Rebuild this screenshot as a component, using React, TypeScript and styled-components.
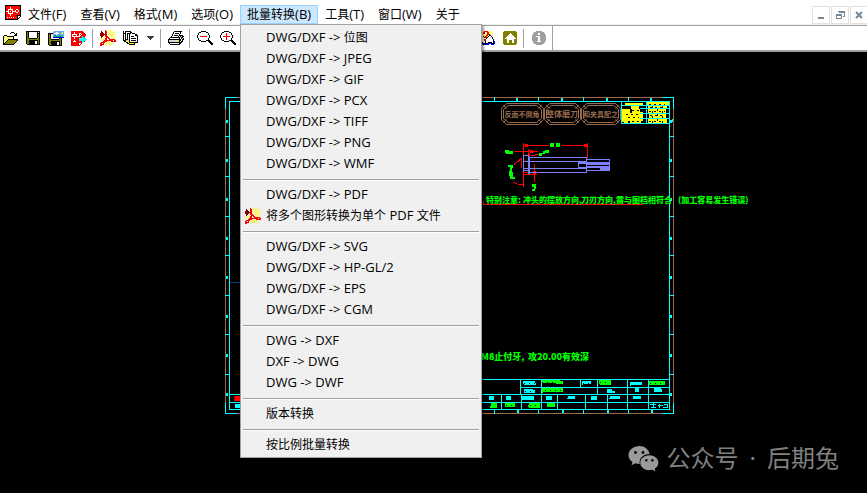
import React from "react";
import styled, { createGlobalStyle, css } from "styled-components";

const GlobalStyle = createGlobalStyle`
  *, *::before, *::after { box-sizing: border-box; }
  body { margin: 0; background: #000; }
  button { font: inherit; color: inherit; }
`;

const uiFont = `"Open Sans", "Noto Sans CJK SC", sans-serif`;

const Window = styled.div`
  position: relative;
  display: flex;
  flex-direction: column;
  min-height: 100vh;
  overflow: hidden;
  background: #000;
  color: #000;
  font-family: ${uiFont};
  font-size: 12px;
`;

const Latin = styled.span`
  font-size: 13px;
`;

const MenuBar = styled.nav`
  display: flex;
  align-items: flex-end;
  height: 25px;
  background: #fff;
  border-bottom: 1px solid #f0f0f0;
`;

const AppIcon = styled.div`
  display: flex;
  width: 21px;
  height: 19px;
  padding-left: 5px;
`;

const MenuEntry = styled.div`
  position: relative;
`;

const MenuTitle = styled.button<{ $open?: boolean }>`
  display: block;
  height: 19px;
  padding: 0 6px;
  border: 1px solid transparent;
  background: transparent;
  line-height: 16px;
  white-space: nowrap;
  ${({ $open }) =>
    $open &&
    css`
      background: #cce8ff;
      border-color: #99d1ff;
    `}
`;

const WindowControls = styled.div`
  display: flex;
  gap: 1px;
  margin-left: auto;
  margin-right: -1px;
`;

const ControlButton = styled.button`
  display: grid;
  place-items: center;
  width: 18px;
  height: 18px;
  padding: 0;
  border: 1px solid #e2e2e2;
  background: #fff;
`;

const ToolBar = styled.div`
  display: flex;
  align-items: center;
  height: 27px;
  margin-left: -2px;
  background: #fff;
  border-top: 1px solid #a0a0a0;
  border-bottom: 2px solid #a0a0a0;
`;

const ToolButton = styled.button<{ $narrow?: boolean }>`
  display: grid;
  place-items: center;
  flex: none;
  width: ${({ $narrow }) => ($narrow ? 16 : 23)}px;
  height: 24px;
  padding: 0;
  border: 0;
  background: transparent;
`;

const Divider = styled.span<{ $tall?: boolean }>`
  flex: none;
  width: 1px;
  height: ${({ $tall }) => ($tall ? 24 : 19)}px;
  margin: 0 ${({ $tall }) => ($tall ? 0 : 3)}px 0 2px;
  background: #a0a0a0;
`;

const ToolGap = styled.span`
  flex: none;
  width: 236px;
`;

const Dropdown = styled.ul`
  position: absolute;
  z-index: 2;
  top: 100%;
  left: 0;
  width: 242px;
  margin: 0;
  padding: 2px;
  list-style: none;
  background: #f0f0f0;
  border: 1px solid #a0a0a0;
  box-shadow: 2px 2px 2px rgba(0, 0, 0, 0.4);
`;

const Command = styled.button`
  display: grid;
  grid-template-columns: 23px 1fr;
  align-items: center;
  width: 100%;
  height: 21px;
  padding: 0;
  border: 0;
  background: transparent;
  text-align: left;
  white-space: pre;
  line-height: 20px;
`;

const CommandLabel = styled.span`
  grid-column: 2;
`;

const CommandIcon = styled.span`
  display: flex;
  padding-left: 2px;
`;

const Rule = styled.li`
  height: 2px;
  margin: 5px 0 3px;
  background: #fff;
  border-top: 1px solid #a0a0a0;
`;

const Canvas = styled.main`
  display: flex;
  flex: 1;
  min-height: 0;
  background: #000;
`;

const Sheet = styled.svg`
  flex: 1;
  width: 100%;
  min-width: 0;
  font-family: "Noto Sans CJK SC", sans-serif;
`;

const Watermark = styled.div`
  position: absolute;
  right: 28px;
  bottom: 17px;
  display: flex;
  align-items: center;
  gap: 8px;
  color: #808080;
  font-family: "Noto Sans", "Noto Sans CJK SC", sans-serif;
  font-size: 24px;
  line-height: 36px;
`;

const WatermarkText = styled.div`
  display: flex;
  gap: 11px;
`;

const palette: Record<string, string> = {
  k: "#000000",
  w: "#ffffff",
  y: "#ffff00",
  o: "#808000",
  r: "#ff0000",
  m: "#800000",
  g: "#a0a0a0",
  s: "#d4d4d4",
  b: "#0000ff",
  c: "#00ffff",
  l: "#6aa8ff",
  n: "#00b050",
};

function PixelIcon({ rows }: { rows: string[] }) {
  const cells: React.ReactElement[] = [];
  rows.forEach((row, y) => {
    let x = 0;
    while (x < row.length) {
      const code = row[x];
      let end = x + 1;
      while (row[end] === code) end += 1;
      if (palette[code]) {
        cells.push(<rect key={`${x}-${y}`} x={x} y={y} width={end - x} height={1} fill={palette[code]} />);
      }
      x = end;
    }
  });
  const width = Math.max(...rows.map((r) => r.length));
  return (
    <svg width={width} height={rows.length} shapeRendering="crispEdges" aria-hidden="true">
      {cells}
    </svg>
  );
}

const openRows = [
  ".........kkk....",
  "........k...k.k.",
  ".............kk.",
  "..kkk.......kkk.",
  ".kywykkkkkkk....",
  ".kwywywywywk....",
  ".kywywywywyk....",
  ".kwywykkkkkkkkkk",
  ".kywykoooooooook",
  ".kwykoooooooook.",
  ".kykoooooooook..",
  ".kkoooooooook...",
  ".kkkkkkkkkkk....",
];
const saveRows = [
  "kkkkkkkkkkkkkk",
  "kokwwwwwwwwkwk",
  "kokwwwwwwwwkkk",
  "kokwwwwwwwwkok",
  "kokwwwwwwwwkok",
  "kokwwwwwwwwkok",
  "kokwwwwwwwwkok",
  "kookkkkkkkkook",
  "kooooooooooook",
  "kookkkkkkkkkok",
  "kookkkkkkwwkok",
  "kookkkkkkwwkok",
  "kookkkkkkwwkok",
  ".kkkkkkkkkkkkk",
];
const saveAsRows = [
  ".....yllllllllll",
  ".....lllwwllllyl",
  "kkkkklwwwwwllyyl",
  "kokwwlllwlllllll",
  "kokwwlnnlllnnlll",
  "kokwwlonnnnnnnnl",
  "kokwwbbbbbbbbbbb",
  "kokwwwwwwwwkok..",
  "kookkkkkkkkook..",
  "kooooooooooook..",
  "kookkkkkkkkkok..",
  "kookkkkkkwwkok..",
  "kookkkkkkwwkok..",
  "kookkkkkkwwkok..",
  ".kkkkkkkkkkkkk..",
];
const exportRows = [
  "rrrrrrrrrrrr....",
  "rrrwrrrrrrrrr...",
  "rrrwrrrrwwrrrr..",
  "rwwwwwrrwrwrrrr.",
  "rwrrrwrrwwrrrrr.",
  "rwwwwwwwwrrcrr..",
  "rrrwrrrrrrrccr..",
  "rrrwrrrrccccccc.",
  "rrrrrrrrcccccccc",
  "rrrwrrrrccccccc.",
  "rrwwwrrrrrrccr..",
  "rrrrrrrrrrrc....",
  "rrrrrrrrwwr.....",
  "rrrrrrrrwr......",
  "rrrrrrrrr.......",
];
const appRows = [
  "kkkkkkkkkkkkkkkk",
  "krrrrrrrrrrrrrrk",
  "krrrrwrrrrrrrrrk",
  "krrrrwrrrrrrrrrk",
  "krrwwwwwrrrwwrrk",
  "krrwrrrwrrwrrwrk",
  "kwwwrwrwwwwrrwrk",
  "krrwrrrwrrrwwrrk",
  "krrwwwwwrrrrrrrk",
  "krrrrwrrrrrrrrrk",
  "krrrrwrrrrrrkkkk",
  "krrrrrrrrrrrkwwk",
  "krwrwrwrwrrrkwk.",
  "krrrrrrrrrrrkk..",
  "kkkkkkkkkkkkk...",
];
const pdfRows = [
  ".....r..y.y.....",
  ".m...rr..y.y.y..",
  ".mm..rr.y.y.y.y.",
  "mmmm.rr..y.y.y..",
  "mmmmmmr.y.y.y.y.",
  "mmmm.rr..y.y.y..",
  ".mm..rrr..y.y.y.",
  ".m..y.rrr..y.y..",
  "..y.yrr.rr..y.y.",
  ".y.y.rr..rrrrrr.",
  "..y.rrrrrrrrr.rr",
  "...rrrr.y..rrrrr",
  ".rrrr..y.y.y....",
  "rr.r..y.y.y.y...",
  "rrrr.y.y.y.y....",
  "rr..............",
];
const copyRows = [
  "k.kkkkkk........",
  "k.k....kk.......",
  "kkk.kkkk.kkk....",
  "k.k.k.k.....kk..",
  "k.k.k.kwwwwwkkk.",
  "k.k.k.kwkkkwwwk.",
  "k.k.k.kwwwwwwwk.",
  "k.k.k.kwkkkkkwk.",
  "k.kkkskwwwwwwwk.",
  "kkkssskwkkkkkwk.",
  ".kkyyykwwwwwwwk.",
  "...kkykkkkkkkkk.",
  "....kkyyyyyk....",
  "......kkkkkk....",
];
const printRows = [
  "......kkkkkkkk..",
  ".....kwwwwwwk...",
  ".....kwkkkkwk...",
  "....kwwwwwwk....",
  "....kwkkkkwkkkk.",
  "...kwwwwwwk.k.kk",
  "..kkkkkkkkkk.kk.",
  ".k.........k.k.k",
  "kkkkkkkkkkkkk.kk",
  "ksssssssyyskk.k.",
  "kssssssssssk.kk.",
  "kkkkkkkkkkkkkk..",
  ".k.........kk...",
  "..kkkkkkkkkk....",
];
const zoomRows = (plus: boolean) => [
  "....kkkkk.......",
  "..kk.....kk.....",
  plus ? ".k....r....k...." : ".k.........k....",
  plus ? ".k....r....k...." : ".k.........k....",
  plus ? "k.....r.....k..." : "k...........k...",
  "k..rrrrrrr..k...",
  plus ? "k.....r.....k..." : "k...........k...",
  plus ? ".k....r....k...." : ".k.........k....",
  plus ? ".k....r....k...." : ".k.........k....",
  "..kk.....kkkk...",
  "....kkkkk..kkk..",
  "............kkk.",
  ".............kkk",
  "..............kk",
];
const helpRows = [
  "....yrrrry.y....",
  "...yrr.yrry.y...",
  "..y.rr..rr.y.y..",
  "...y.y.yrrky....",
  "..k.y.yrr.kk.y..",
  ".kwwkyrrykwwk...",
  ".kwwwkrrkwwwwk..",
  ".kwwwwykwwwwwk..",
  "kwwwwrrwwwwwwwk.",
  "kwwwwrrwwwwwwwk.",
  "kwwwwwkwwwwwwwkb",
  "kkkkwwkwwkkkkwkb",
  "bbbbkkkkkbbbbkkb",
  "...bbbkbbb..bbb.",
];
const homeRows = [
  ".oooooooooooo.",
  "oooooooooooooo",
  "ooooooowoooooo",
  "oooooowwwooooo",
  "ooooowwwwwoooo",
  "oooowwwwwwwooo",
  "ooowwwwwwwwwoo",
  "oowwwwwwwwwwwo",
  "oooowwwwwwwooo",
  "oooowwooowwooo",
  "oooowwooowwooo",
  "oooowwooowwooo",
  "oooooooooooooo",
  ".oooooooooooo.",
];
const infoRows = [
  "....gggggg....",
  "..gggggggggg..",
  ".gggggwwggggg.",
  ".gggggwwggggg.",
  "gggggggggggggg",
  "ggggwwwwgggggg",
  "ggggggwwgggggg",
  "ggggggwwgggggg",
  "ggggggwwgggggg",
  "ggggggwwgggggg",
  ".ggggwwwwgggg.",
  ".gggggggggggg.",
  "..gggggggggg..",
  "....gggggg....",
];

const titlesBefore = ["文件(F)", "查看(V)", "格式(M)", "选项(O)"];
const titlesAfter = ["工具(T)", "窗口(W)", "关于"];

const groups: string[][] = [
  ["位图", "JPEG", "GIF", "PCX", "TIFF", "PNG", "WMF"].map((f) => `DWG/DXF -> ${f}`),
  ["DWG/DXF -> PDF", "将多个图形转换为单个 PDF 文件"],
  ["SVG", "HP-GL/2", "EPS", "CGM"].map((f) => `DWG/DXF -> ${f}`),
  ["DWG -> DXF", "DXF -> DWG", "DWG -> DWF"],
  ["版本转换"],
  ["按比例批量转换"],
];

/* Latin runs are set one pixel larger than the Chinese ones beside them. */
function MixedText({ text }: { text: string }) {
  return (
    <>
      {text
        .split(/([\x20-\x7e]+)/)
        .filter(Boolean)
        .map((run, i) => (run.charCodeAt(0) < 128 ? <Latin key={i}>{run}</Latin> : run))}
    </>
  );
}

function BatchMenu() {
  return (
    <Dropdown>
      {groups.map((items, g) => (
        <React.Fragment key={g}>
          {g > 0 && <Rule aria-hidden="true" />}
          {items.map((label) => (
            <li key={label}>
              <Command type="button">
                {label.startsWith("将") && (
                  <CommandIcon>
                    <PixelIcon rows={pdfRows} />
                  </CommandIcon>
                )}
                <CommandLabel>
                  <MixedText text={label} />
                </CommandLabel>
              </Command>
            </li>
          ))}
        </React.Fragment>
      ))}
    </Dropdown>
  );
}

const CYAN = "#00ffff";
const BROWN = "#996b4d";
const GREEN = "#00ff00";
const VIOLET = "#8080ff";

const columnTicks = [270, 315, 359, 404, 449, 494, 538, 583, 628];
const columnMarks = [248, 292, 337, 382, 427, 471, 516, 561, 606, 650];
const rowTicks = [136, 176, 216, 255, 295, 334, 374];
const rowMarks = [120, 159, 198, 237, 276, 315, 354, 393];

function Border() {
  return (
    <g fill="none" strokeWidth="1" shapeRendering="crispEdges">
      <rect x="225.5" y="97.5" width="448" height="316" stroke={BROWN} />
      <path
        stroke={CYAN}
        d="M237 97.5H225.5V109M662 97.5H673.5V109M225.5 403V413.5H237M662 413.5H673.5V403M229.5 101.5H669.5V409.5H229.5Z"
      />
      {columnTicks.map((x) => (
        <path key={x} stroke={CYAN} d={`M${x + 0.5} 97V101M${x + 0.5} 410V414`} />
      ))}
      {rowTicks.map((y) => (
        <path key={y} stroke={CYAN} d={`M225 ${y + 0.5}H229M670 ${y + 0.5}H674`} />
      ))}
      {columnMarks.map((x) => (
        <path key={x} fill={CYAN} d={`M${x} 98h2v3h-2zM${x + 1} 410h2v3h-2z`} />
      ))}
      {rowMarks.map((y) => (
        <path key={y} fill={CYAN} d={`M226 ${y}h2v3h-2zM670 ${y}h2v3h-2z`} />
      ))}
      <path stroke="#004080" strokeWidth="1" d="M230 282.5H242" />
    </g>
  );
}

function Stamp({ x, width, label }: { x: number; width: number; label: string }) {
  const r = x + width;
  return (
    <g>
      <g fill="none" stroke={BROWN} strokeWidth="1">
        <path d={`M${x + 5}.5 103.5H${r - 5}.5L${r}.5 108.5V119.5L${r - 5}.5 124.5H${x + 5}.5L${x}.5 119.5V108.5Z`} />
        <path d={`M${x + 7}.5 105.5H${r - 7}.5L${r - 2}.5 109.5V118.5L${r - 7}.5 122.5H${x + 7}.5L${x + 2}.5 118.5V109.5Z`} />
        <path d={`M${x + 2}.5 105.5l3 3M${r - 2}.5 105.5l-3 3M${x + 2}.5 122.5l3 -3M${r - 2}.5 122.5l-3 -3`} />
      </g>
      <text x={x + width / 2} y="117" fill={BROWN} fontSize={label.length > 4 ? 7 : 8} fontWeight="700" textAnchor="middle">
        {label}
      </text>
    </g>
  );
}

function ScheduleTable() {
  return (
    <g shapeRendering="crispEdges">
      <path
        fill="#ffff00"
        d="M625 103h18v2h-18zM647 102h22v3h-22zM631 106h8v3h-8zM622 109h8v4h2v-4h8v3h3v9h-18v1h-3zM630 119h11v5h-11zM624 119h4v4h-4zM648 106h19v2h-19zM648 109h18v4h-18zM649 114h17v4h-17zM648 119h19v4h-19z"
      />
      <path
        stroke="#000"
        strokeDasharray="2 3"
        d="M632 110.5h9M626 114.5h15M628 117.5h11M649 104.5h16M650 107.5h15M649 111.5h16M650 115.5h15M649 121.5h15M632 121.5h8"
      />
      <path stroke="#000" d="M652.5 106V123M657.5 108V123M662.5 106V123" strokeDasharray="3 2" />
      <path stroke={CYAN} fill="none" d="M621.5 102V123.5H669M621 105.5H669M646.5 102V123M640 108.5h29M640 113.5h29M640 118.5h29M669 121.5h3v-3" />
    </g>
  );
}

function Punch() {
  return (
    <g fill="none" strokeWidth="1" shapeRendering="crispEdges">
      <path stroke="#ff0000" d="M523.5 143V187M587.5 143V158M524 145.5H549M562 145.5H587M514 151.5H538M528.5 149V159M534.5 164V182M523 172.5H537M523 174.5H537M514 164.5L521.5 158.5V168M513 182l4 2M518 184l5 1M531 156l8-2" />
      <path fill="#ff0000" d="M525 144h3v3h-3zM584 144h3v3h-3zM530 150h3v3h-3zM528 153h2v4h-2zM533 171h3v4h-3z" />
      <path stroke={VIOLET} d="M523.5 155.5h5v18M523.5 155V172M529 157.5H586.5V172.5H529M524 161.5H587M524 168.5H587M578.5 162V168M586 159.5H609.5V170.5H586M523 170.5H529" />
      <path fill={VIOLET} d="M528 157h2v17h-2zM579 162h21v2h-21zM587 164h22v4h-22zM600 162h10v3h-10zM600 166h10v4h-10zM579 167h21v1h-21z" />
      <path stroke="#000" d="M587 165.5H609" />
      <path fill={GREEN} d="M550 143h4v4h-4zM556 143h4v4h-4zM505 150h4v1h4v3h-7v-1h-1zM539 153h4v-2h2v3h-3v2h-3zM545 150h4v3h-4zM508 165h5v3h-1v4h1v5h2v2h-5v-3h-1v-5h1v-4h-2zM532 184h4v5h-1v2h-3v-2h2v-2h-2z" />
    </g>
  );
}

function TitleBlock() {
  return (
    <g shapeRendering="crispEdges">
      <path
        fill="none"
        stroke={CYAN}
        d="M230 379.5H669M520 387.5H669M230 394.5H669M230 402.5H669M520.5 379V394M541.5 379V409M580.5 379V387M597.5 379V394M627.5 379V409M648.5 379V409M501.5 394V409M521.5 394V409M557.5 394V409M585.5 394V409M607.5 394V409"
      />
      <path
        fill={CYAN}
        d="M523 381h12v2h1v2h-12v-1h-1zM524 389h9v1h2v3h-11zM582 381h9v3h-8v1h-1zM630 382h12v3h-11v1h-1zM607 389h5v2h3v2h-8zM635 388h4v4h-4zM654 388h7v1h1v3h-8zM489 396h5v4h-5zM506 396h5v4h-5zM522 396h12v4h-12zM546 396h6v4h-6zM568 396h7v3h-8v-1h1zM591 396h6v4h-6zM610 396h10v3h-11v-1h1zM633 396h8v3h-8zM235 404h6v2h-1v2h-5z"
      />
      <path
        fill={GREEN}
        d="M542 380h18v4h3v-3h-3v3h-4v-1h-14zM599 380h12v5h-11v-1h-1zM649 381h16v4h-16zM542 388h21v4h-20v1h-1zM491 403h6v5h-7v-2h1zM505 403h10v4h-10zM529 403h11v5h-11v-1h-1zM547 403h8v4h-8z"
      />
      <path fill="none" stroke="#000" strokeDasharray="1 4" d="M524 383.5h11M525 391.5h9M542 382.5h14M600 382.5h10M650 383.5h14M545 390.5h17M506 405.5h8M530 405.5h8M583 383.5h7" />
      <path fill="#000" d="M230 379h11v1h-11z" />
      <path fill="#ff0000" d="M234 396h8v5h-8v-2h1v-1h-1z" />
      <path fill="none" stroke={CYAN} d="M650 404.5h6M651 407.5h5M653.5 403v5M658 405.5h5M659.5 404v4M664 404.5h3v3h-4" />
    </g>
  );
}

function Drawing() {
  return (
    <Sheet viewBox="0 52 867 441" role="img" aria-label="DWG">
      <Border />
      <Stamp x={501} width={42} label="反面不倒角" />
      <Stamp x={544} width={36} label="整体磨刀" />
      <Stamp x={581} width={39} label="和夹具配之" />
      <ScheduleTable />
      <Punch />
      <path stroke="#ff0000" fill="none" d="M483 201v3.5H643" shapeRendering="crispEdges" />
      <g fill={GREEN} fontSize="8" fontWeight="900">
        <text x="486" y="203">特别注意:</text>
        <text x="523" y="203">冲头的摆放方向,</text>
        <text x="581" y="203">刀刃方向,</text>
        <text x="616" y="203">需与图档相符合</text>
        <text x="678" y="203">(加工容易发生错误)</text>
      </g>
      <g fill={GREEN} fontSize="9" fontWeight="900">
        <text x="472" y="360">攻M8止付牙,</text>
        <text x="528" y="360">攻20.00有效深</text>
      </g>
      <TitleBlock />
    </Sheet>
  );
}

export default function App() {
  return (
    <Window>
      <GlobalStyle />
      <MenuBar>
        <AppIcon>
          <PixelIcon rows={appRows} />
        </AppIcon>
        {titlesBefore.map((t) => (
          <MenuEntry key={t}>
            <MenuTitle type="button">
              <MixedText text={t} />
            </MenuTitle>
          </MenuEntry>
        ))}
        <MenuEntry>
          <MenuTitle type="button" $open aria-expanded="true">
            <MixedText text="批量转换(B)" />
          </MenuTitle>
          <BatchMenu />
        </MenuEntry>
        {titlesAfter.map((t) => (
          <MenuEntry key={t}>
            <MenuTitle type="button">
              <MixedText text={t} />
            </MenuTitle>
          </MenuEntry>
        ))}
        <WindowControls>
          <ControlButton type="button" aria-label="最小化">
            <svg width="10" height="10" shapeRendering="crispEdges">
              <path fill="#778899" d="M2 7h6v2H2z" />
            </svg>
          </ControlButton>
          <ControlButton type="button" aria-label="还原">
            <svg width="10" height="10" shapeRendering="crispEdges">
              <path fill="#778899" d="M3 1h7v6H8V6h1V3H4V2H3zM1 4h6v5H1zM2 6v2h4V6z" fillRule="evenodd" />
            </svg>
          </ControlButton>
          <ControlButton type="button" aria-label="关闭">
            <svg width="10" height="10">
              <path stroke="#778899" strokeWidth="2" d="M2 2l6 6M8 2l-6 6" />
            </svg>
          </ControlButton>
        </WindowControls>
      </MenuBar>
      <ToolBar>
        <ToolButton type="button" aria-label="打开"><PixelIcon rows={openRows} /></ToolButton>
        <ToolButton type="button" aria-label="保存"><PixelIcon rows={saveRows} /></ToolButton>
        <ToolButton type="button" aria-label="保存图像"><PixelIcon rows={saveAsRows} /></ToolButton>
        <ToolButton type="button" aria-label="导出"><PixelIcon rows={exportRows} /></ToolButton>
        <Divider />
        <ToolButton type="button" aria-label="转换为 PDF"><PixelIcon rows={pdfRows} /></ToolButton>
        <ToolButton type="button" aria-label="批量"><PixelIcon rows={copyRows} /></ToolButton>
        <ToolButton type="button" $narrow aria-label="更多">
          <svg width="7" height="4" shapeRendering="crispEdges"><path d="M0 0h7v1H6v1H5v1H4v1H3V3H2V2H1V1H0z" fill="#404040" /></svg>
        </ToolButton>
        <Divider />
        <ToolButton type="button" aria-label="打印"><PixelIcon rows={printRows} /></ToolButton>
        <Divider />
        <ToolButton type="button" aria-label="缩小"><PixelIcon rows={zoomRows(false)} /></ToolButton>
        <ToolButton type="button" aria-label="放大"><PixelIcon rows={zoomRows(true)} /></ToolButton>
        <ToolGap />
        <ToolButton type="button" aria-label="帮助"><PixelIcon rows={helpRows} /></ToolButton>
        <ToolButton type="button" aria-label="主页"><PixelIcon rows={homeRows} /></ToolButton>
        <Divider />
        <ToolButton type="button" aria-label="信息"><PixelIcon rows={infoRows} /></ToolButton>
        <Divider $tall />
      </ToolBar>
      <Canvas>
        <Drawing />
      </Canvas>
      <Watermark>
        <svg width="31" height="27" viewBox="0 0 31 27" aria-hidden="true">
          <path
            fill="#9a9a9a"
            d="M11.500 1C5.500 1 0.500 5 0.500 10c0 3 1.600 5.400 4 7l-1 3.200 3.800-1.900c1.500.4 2.900.6 4.500.6-1.200-5.200 3.600-10 9.900-9.800C20.600 4.300 16.500 1 11.500 1z"
          />
          <path
            fill="#9a9a9a"
            d="M21.300 10.200c-5 0-9 3.300-9 7.500s4 7.500 9 7.500c1.100 0 2.200-.2 3.200-.5l3 1.700-.8-2.700c2.200-1.400 3.700-3.500 3.700-6 0-4.200-4.200-7.500-9.100-7.500z"
          />
          <g fill="#000">
            <circle cx="7.500" cy="7.500" r="1.400" />
            <circle cx="15" cy="7.500" r="1.400" />
            <circle cx="18.300" cy="15.300" r="1.200" />
            <circle cx="24.400" cy="15.300" r="1.200" />
          </g>
        </svg>
        <WatermarkText>
          <span>公众号</span>
          <span>·</span>
          <span>后期兔</span>
        </WatermarkText>
      </Watermark>
    </Window>
  );
}
